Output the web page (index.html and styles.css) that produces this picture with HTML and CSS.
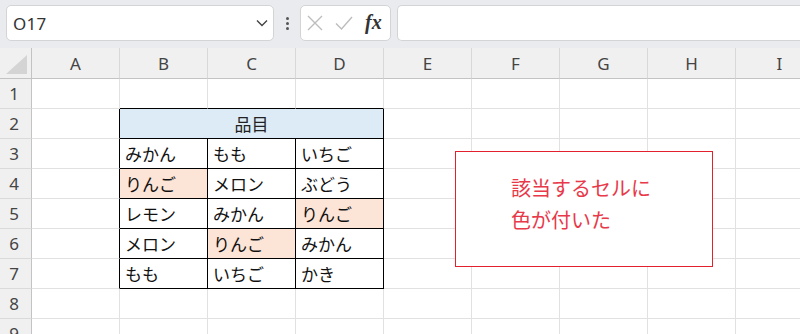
FILE: index.html
```html
<!DOCTYPE html>
<html lang="ja">
<head>
<meta charset="utf-8">
<link rel="stylesheet" href="styles.css">
</head>
<body>
<div class="app">
  <div class="toolbar">
    <div class="namebox">
      <span class="name">O17</span>
      <svg class="chev" width="12" height="8" viewBox="0 0 12 8"><path d="M1 1.5 L6 6.5 L11 1.5" fill="none" stroke="#444" stroke-width="1.4"/></svg>
    </div>
    <div class="dots"><i></i><i></i><i></i></div>
    <div class="fgroup">
      <svg class="xicon" width="16" height="16" viewBox="0 0 16 16"><path d="M1 1 L15 15 M15 1 L1 15" stroke="#bdbdbd" stroke-width="1.4" fill="none"/></svg>
      <svg class="vicon" width="18" height="16" viewBox="0 0 18 16"><path d="M1 8.5 L6.5 14 L17 2" stroke="#bdbdbd" stroke-width="1.4" fill="none"/></svg>
      <span class="fx">fx</span>
    </div>
    <div class="fbar"></div>
  </div>
  <div class="sheet">
    <div class="grid">
      <div class="corner"><svg width="22" height="20" viewBox="0 0 22 20"><path d="M21 0 L21 19 L0 19 Z" fill="#d4d4d4"/></svg></div>
      <div class="ch">A</div><div class="ch">B</div><div class="ch">C</div><div class="ch">D</div><div class="ch">E</div><div class="ch">F</div><div class="ch">G</div><div class="ch">H</div><div class="ch">I</div>

      <div class="rh">1</div>
      <div class="c"></div><div class="c tb"></div><div class="c tb"></div><div class="c tb"></div><div class="c"></div><div class="c"></div><div class="c"></div><div class="c"></div><div class="c"></div>

      <div class="rh">2</div>
      <div class="c tl"></div><div class="c t head">品目</div><div class="c"></div><div class="c"></div><div class="c"></div><div class="c"></div><div class="c"></div>

      <div class="rh">3</div>
      <div class="c tl"></div><div class="c t">みかん</div><div class="c t">もも</div><div class="c t">いちご</div><div class="c"></div><div class="c"></div><div class="c"></div><div class="c"></div><div class="c"></div>

      <div class="rh">4</div>
      <div class="c tl"></div><div class="c t hit">りんご</div><div class="c t">メロン</div><div class="c t">ぶどう</div><div class="c"></div><div class="c"></div><div class="c"></div><div class="c"></div><div class="c"></div>

      <div class="rh">5</div>
      <div class="c tl"></div><div class="c t">レモン</div><div class="c t">みかん</div><div class="c t hit">りんご</div><div class="c"></div><div class="c"></div><div class="c"></div><div class="c"></div><div class="c"></div>

      <div class="rh">6</div>
      <div class="c tl"></div><div class="c t">メロン</div><div class="c t hit">りんご</div><div class="c t">みかん</div><div class="c"></div><div class="c"></div><div class="c"></div><div class="c"></div><div class="c"></div>

      <div class="rh">7</div>
      <div class="c tl"></div><div class="c t">もも</div><div class="c t">いちご</div><div class="c t">かき</div><div class="c"></div><div class="c"></div><div class="c"></div><div class="c"></div><div class="c"></div>

      <div class="rh">8</div>
      <div class="c"></div><div class="c"></div><div class="c"></div><div class="c"></div><div class="c"></div><div class="c"></div><div class="c"></div><div class="c"></div><div class="c"></div>

      <div class="rh">9</div>
      <div class="c"></div><div class="c"></div><div class="c"></div><div class="c"></div><div class="c"></div><div class="c"></div><div class="c"></div><div class="c"></div><div class="c"></div>
    </div>
    <div class="note">該当するセルに<br>色が付いた</div>
  </div>
</div>
</body>
</html>
```

FILE: styles.css
```css
* { box-sizing: border-box; }
html, body { margin: 0; padding: 0; }
body {
  width: 800px;
  height: 334px;
  overflow: hidden;
  background: #ffffff;
  font-family: "Noto Sans", "Noto Sans CJK JP", sans-serif;
}
.app { width: 800px; height: 334px; overflow: hidden; }

.toolbar {
  height: 48px;
  background: #e9ebee;
  display: flex;
  align-items: flex-start;
  padding: 5px 0 0 6px;
}
.namebox {
  width: 268px;
  height: 36px;
  background: #fff;
  border: 1px solid #d3d4d6;
  border-radius: 5px;
  display: flex;
  align-items: center;
  justify-content: space-between;
  padding: 0 5px 0 6px;
}
.name {
  font-family: "Noto Sans", sans-serif;
  font-size: 17px;
  color: #333;
  letter-spacing: 0.3px;
}
.chev { display: block; }
.dots {
  width: 26px;
  height: 36px;
  display: flex;
  flex-direction: column;
  align-items: center;
  justify-content: center;
  gap: 2px;
}
.dots i {
  display: block;
  width: 3px;
  height: 3px;
  border-radius: 50%;
  background: #555;
}
.fgroup {
  width: 91px;
  height: 36px;
  background: #fff;
  border: 1px solid #d3d4d6;
  border-radius: 5px;
  display: flex;
  align-items: center;
  padding-left: 6px;
}
.xicon { display: block; margin-right: 12px; }
.vicon { display: block; margin-right: 12px; }
.fx {
  font-family: "Liberation Serif", serif;
  font-style: italic;
  font-weight: bold;
  font-size: 20px;
  color: #333;
  line-height: 1;
  margin-top: -3px;
}
.fbar {
  flex: 1;
  height: 36px;
  margin-left: 6px;
  background: #fff;
  border: 1px solid #d3d4d6;
  border-right: none;
  border-radius: 5px 0 0 5px;
}

.sheet { position: relative; }
.grid {
  display: grid;
  grid-template-columns: 32px repeat(9, 88px);
  grid-template-rows: 31px repeat(9, 30px);
  width: 824px;
}
.corner {
  background: #f0f0f0;
  border-right: 1px solid #c3c3c3;
  border-bottom: 1px solid #c3c3c3;
  display: flex;
  align-items: flex-end;
  justify-content: flex-end;
  padding: 0 3px 3px 0;
}
.corner svg { display: block; }
.ch {
  background: #f0f0f0;
  border-right: 1px solid #d8d8d8;
  border-bottom: 1px solid #c3c3c3;
  display: flex;
  align-items: center;
  justify-content: center;
  font-size: 17px;
  color: #444;
  padding-top: 1px;
}
.rh {
  background: #f0f0f0;
  border-right: 1px solid #c3c3c3;
  border-bottom: 1px solid #dadada;
  display: flex;
  align-items: center;
  justify-content: center;
  font-size: 17px;
  color: #444;
  padding-right: 3px;
}
.c {
  border-right: 1px solid #e1e1e1;
  border-bottom: 1px solid #e1e1e1;
  display: flex;
  align-items: center;
  padding-left: 5px;
  font-family: "Noto Sans CJK JP", sans-serif;
  font-size: 17px;
  color: #111;
  white-space: nowrap;
}
.c.tb { border-bottom-color: #000; }
.c.tl { border-right-color: #000; }
.c.t {
  border-right-color: #000;
  border-bottom-color: #000;
}
.c.head {
  grid-column: span 3;
  background: #ddebf7;
  justify-content: center;
  padding-left: 0;
  color: #222;
}
.c.hit { background: #fce4d6; }

.note {
  position: absolute;
  left: 455px;
  top: 103px;
  width: 258px;
  height: 116px;
  background: #fff;
  border: 1px solid #e3202e;
  padding: 20px 0 0 55px;
  font-family: "Noto Sans CJK JP", sans-serif;
  font-size: 20px;
  line-height: 32px;
  color: #e8394a;
}
```
